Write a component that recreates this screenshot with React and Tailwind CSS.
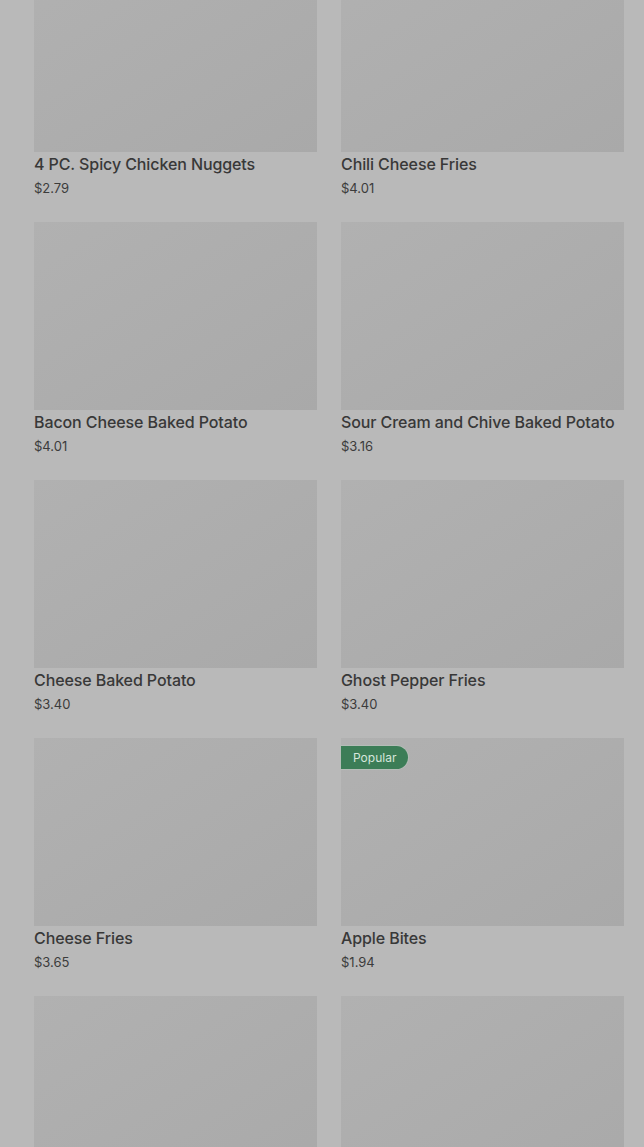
const items = [
  { name: "4 PC. Spicy Chicken Nuggets", price: "$2.79" },
  { name: "Chili Cheese Fries", price: "$4.01" },
  { name: "Bacon Cheese Baked Potato", price: "$4.01" },
  { name: "Sour Cream and Chive Baked Potato", price: "$3.16" },
  { name: "Cheese Baked Potato", price: "$3.40" },
  { name: "Ghost Pepper Fries", price: "$3.40" },
  { name: "Cheese Fries", price: "$3.65" },
  { name: "Apple Bites", price: "$1.94", popular: true },
];

function ItemImage({ popular }) {
  return (
    <div className="relative h-[188px] bg-gradient-to-br from-[#b1b1b1] to-[#a9a9a9]">
      {popular && (
        <span className="absolute left-0 top-2 rounded-l-[2px] rounded-r-full bg-[#3c7d57] px-3 text-[12px] leading-[23px] text-[#d6e6dc] ring-1 ring-[#b4bdb7]">
          Popular
        </span>
      )}
    </div>
  );
}

function ItemCard({ item }) {
  return (
    <div className="flex flex-col">
      <ItemImage popular={item.popular} />
      <div className="text-[16px] font-medium leading-6 tracking-[-0.1px] text-[#383838]">{item.name}</div>
      <div className="mt-0.5 text-[13px] leading-5 text-[#3c3c3c]">{item.price}</div>
    </div>
  );
}

export default function App() {
  return (
    <div
      className="h-[1147px] overflow-hidden bg-[#b9b9b9]"
      style={{ fontFamily: "Inter, 'Liberation Sans', sans-serif" }}
    >
      <div className="-mt-[36px] grid grid-cols-2 gap-x-6 gap-y-6 pl-[34px] pr-5">
        {items.map((item) => (
          <ItemCard key={item.name} item={item} />
        ))}
        {/* next row, only the photos are in view */}
        <ItemImage />
        <ItemImage />
      </div>
    </div>
  );
}
